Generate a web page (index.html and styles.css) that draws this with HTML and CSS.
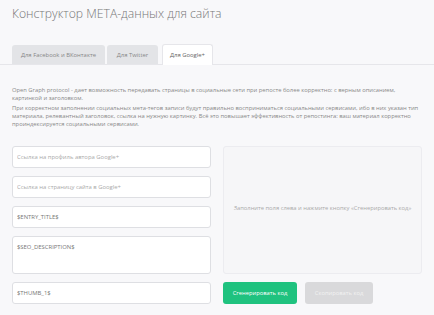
FILE: index.html
```html
<!DOCTYPE html>
<html>
<head>
  <title>Конструктор META-данных для сайта</title>
  <link rel="stylesheet" href="styles.css">
</head>
<body>
  <h1 class="page-title">Конструктор META-данных для сайта</h1>

  <!-- Tabs -->
  <div class="tabs">
    <span class="tab">Для Facebook и ВКонтакте</span>
    <span class="tab">Для Twitter</span>
    <span class="tab active">Для Google+</span>
  </div>

  <div class="intro">
    <p>Open Graph protocol - дает возможность передавать страницы в социальные сети при репосте более корректно: с верным описанием, картинкой и заголовком.</p>
    <p>При корректном заполнении социальных мета-тегов записи будут правильно восприниматься социальными сервисами, ибо в них указан тип материала, релевантный заголовок, ссылка на нужную картинку. Всё это повышает эффективность от репостинга: ваш материал корректно проиндексируется социальными сервисами.</p>
  </div>

  <div class="builder">
    <form class="fields">
      <input type="text" class="field" placeholder="Ссылка на профиль автора Google+">
      <input type="text" class="field" placeholder="Ссылка на страницу сайта в Google+">
      <input type="text" class="field" value="$ENTRY_TITLE$">
      <textarea class="field area">$SEO_DESCRIPTION$</textarea>
      <input type="text" class="field" value="$THUMB_1$">
    </form>

    <div class="output">
      <div class="result">Заполните поля слева и нажмите кнопку «Сгенерировать код»</div>
      <div class="actions">
        <button class="btn btn-green">Сгенерировать код</button>
        <button class="btn btn-gray">Скопировать код</button>
      </div>
    </div>
  </div>
</body>
</html>
```

FILE: styles.css
```css
body {
  margin: 0;
  padding: 0 12px;
  background-color: #f8f8fa;
  font-family: "Open Sans", Arial, sans-serif;
  color: #777;
}

.page-title {
  margin: 0;
  padding-top: 5px;
  font-size: 12.2px;
  font-weight: 300;
  line-height: 18px;
  color: #777;
}

/* Tabs */
.tabs {
  display: flex;
  align-items: flex-end;
  gap: 2px;
  margin: 21px -12px 0;
  padding: 0 12px;
  height: 20px;
  border-bottom: 1px solid #e6e6ea;
}

.tab {
  display: flex;
  align-items: center;
  justify-content: center;
  height: 19px;
  background-color: #e3e4e7;
  border-radius: 3px 3px 0 0;
  font-size: 5.9px;
  color: #888;
}

.tab:nth-child(1) { width: 93px; }
.tab:nth-child(2) { width: 51px; margin-right: 2px; }

.tab.active {
  width: 49px;
  height: 20px;
  margin-bottom: -1px;
  background-color: #fff;
  border: 1px solid #e6e6ea;
  border-bottom: none;
  color: #666;
}

/* Intro text */
.intro {
  margin-top: 21px;
  font-size: 5.8px;
  line-height: 8.2px;
  color: #888;
}

.intro p {
  margin: 0 0 1.5px;
}

/* Builder */
.builder {
  display: grid;
  grid-template-columns: 1fr 1fr;
  gap: 12px;
  margin-top: 17px;
}

.fields {
  display: flex;
  flex-direction: column;
  gap: 8px;
}

.field {
  box-sizing: border-box;
  width: 100%;
  height: 22px;
  padding: 0 4px;
  background-color: #fff;
  border: 1px solid #dedfe3;
  border-radius: 3px;
  font-family: "Open Sans", Arial, sans-serif;
  font-size: 5.9px;
  color: #777;
  outline: none;
}

.field::placeholder {
  color: #aaa;
}

.area {
  height: 38px;
  padding-top: 6px;
  resize: none;
}

.output {
  display: flex;
  flex-direction: column;
  gap: 8px;
}

.result {
  box-sizing: border-box;
  height: 128px;
  display: flex;
  align-items: center;
  justify-content: center;
  padding-bottom: 4px;
  background-color: #f6f6f8;
  border: 1px solid #ececf0;
  border-radius: 3px;
  font-size: 5.8px;
  color: #aaa;
}

.actions {
  display: flex;
  gap: 8px;
}

.btn {
  height: 22px;
  border: none;
  border-radius: 3px;
  font-family: "Open Sans", Arial, sans-serif;
  font-size: 5.8px;
  cursor: pointer;
}

.btn-green {
  width: 74px;
  background-color: #1fc27f;
  color: #fff;
}

.btn-gray {
  width: 68px;
  background-color: #d9d9db;
  color: #f2f2f2;
}
```
